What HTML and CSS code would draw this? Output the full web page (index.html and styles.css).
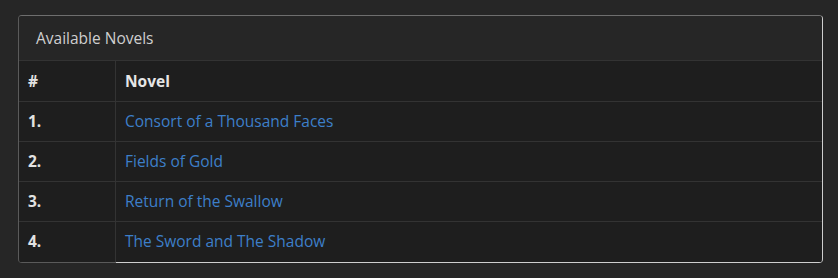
FILE: index.html
```html
<!DOCTYPE html>
<html lang="en">
  <head>
    <meta charset="UTF-8" />
    <title>Available Novels</title>
    <link rel="stylesheet" href="styles.css">
  </head>
  <body>
    <div class="page">
      <div class="panel">
        <div class="panel-heading">Available Novels</div>

        <table class="novel-table">
          <thead>
            <tr>
              <th class="col-num">#</th>
              <th>Novel</th>
            </tr>
          </thead>
          <tbody>
            <tr>
              <td class="col-num">1.</td>
              <td><a href="#">Consort of a Thousand Faces</a></td>
            </tr>
            <tr>
              <td class="col-num">2.</td>
              <td><a href="#">Fields of Gold</a></td>
            </tr>
            <tr>
              <td class="col-num">3.</td>
              <td><a href="#">Return of the Swallow</a></td>
            </tr>
            <tr class="last">
              <td class="col-num">4.</td>
              <td><a href="#">The Sword and The Shadow</a></td>
            </tr>
          </tbody>
        </table>
      </div>
    </div>
  </body>
</html>
```

FILE: styles.css
```css
body {
  font-family: "Open Sans", "Liberation Sans", sans-serif;
  font-size: 15.5px;
  background-color: #262626;
  color: #d8d8d8;
  margin: 0;
}

.page {
  padding: 15px 15px 0 18px;
}

.panel {
  border: 1px solid #6e6e6e;
  border-left-color: #5a5a5a;
  border-right-color: #cfcfcf;
  border-bottom: none;
  border-radius: 4px;
  overflow: hidden;
  background-color: #1e1e1e;
}

.panel-heading {
  background-color: #262626;
  color: #cfcfcf;
  padding: 12px 17px 12px;
  line-height: 20px;
  border-bottom: 1px solid #333;
}

.novel-table {
  width: 100%;
  border-collapse: collapse;
}

.novel-table th,
.novel-table td {
  text-align: left;
  padding: 9px;
  line-height: 21px;
  border-top: 1px solid #333;
}

.novel-table thead th {
  border-top: none;
  padding-top: 10px;
  color: #e6e6e6;
  font-weight: bold;
}

.novel-table tr.last td {
  padding-bottom: 10px;
  border-bottom: 1px solid #cfcfcf;
}

.novel-table .col-num {
  width: 78px;
  border-right: 1px solid #333;
  font-weight: bold;
  color: #e2e2e2;
}

.novel-table tr.last td.col-num {
  border-bottom-color: #5a5a5a;
}

.novel-table a {
  color: #3d7fc9;
  text-decoration: none;
}
```
